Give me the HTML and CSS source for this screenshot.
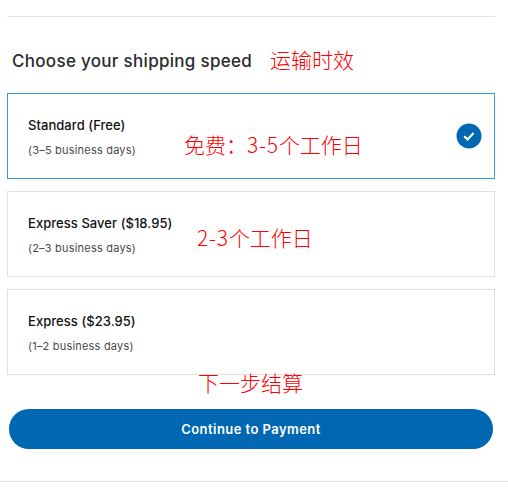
FILE: index.html
```html
<!DOCTYPE html>
<html lang="en">
<head>
  <meta charset="UTF-8">
  <title>Choose your shipping speed</title>
  <link rel="stylesheet" href="styles.css">
</head>
<body>
  <div class="page">
    <form class="shipping">
      <h2>Choose your shipping speed</h2>
      <div class="options">
        <label class="card selected">
          <span class="info">
            <strong>Standard (Free)</strong>
            <small>(3–5 business days)</small>
          </span>
          <svg class="check" viewBox="0 0 26 26" width="26" height="26">
            <circle cx="13" cy="13" r="12.5" fill="#0067b2"/>
            <path d="M8.2 13.3l3.3 3.1 6.1-6.4" fill="none" stroke="#fff" stroke-width="2.2"/>
          </svg>
        </label>
        <label class="card">
          <span class="info">
            <strong>Express Saver ($18.95)</strong>
            <small>(2–3 business days)</small>
          </span>
        </label>
        <label class="card">
          <span class="info">
            <strong>Express ($23.95)</strong>
            <small>(1–2 business days)</small>
          </span>
        </label>
      </div>
      <button type="button" class="continue">Continue to Payment</button>
    </form>

    <span class="note note-title">运输时效</span>
    <span class="note note-free">免费：<span class="num">3-5</span>个工作日</span>
    <span class="note note-saver"><span class="num">2-3</span>个工作日</span>
    <span class="note note-next">下一步结算</span>
  </div>
</body>
</html>
```

FILE: styles.css
```css
body { margin: 0; background: #fff; font-family: "Inter", "Liberation Sans", sans-serif; color: #1f1f1f; }
.page { position: relative; height: 497px; overflow: hidden; }
.shipping {
  padding: 0 0 0 7px;
  border-bottom: 1px solid #e2e2e2;
  box-sizing: border-box;
  height: 482px;
}
.shipping::before {
  content: "";
  display: block;
  height: 16px;
  width: 488px;
  border-bottom: 1px solid #e2e2e2;
}
h2 { margin: 34px 0 22px 5px; font-size: 17px; line-height: 20px; font-weight: 500; letter-spacing: 0.3px; color: #2b2b2b; }
.options { display: flex; flex-direction: column; gap: 12px; width: 488px; }
.card {
  display: flex;
  align-items: center;
  justify-content: space-between;
  height: 86px;
  box-sizing: border-box;
  border: 1px solid #e0e0e0;
  padding: 0 12px 0 20px;
}
.card.selected { border-color: #2f9fdf; }
.info { display: flex; flex-direction: column; gap: 10px; padding-top: 2px; }
.info strong { font-size: 13px; line-height: 16px; font-weight: 500; letter-spacing: 0.05px; color: #111; }
.info small { font-size: 11px; line-height: 14px; letter-spacing: 0.2px; color: #4a4a4a; }
.continue {
  display: block;
  width: 484px;
  height: 40px;
  margin: 34px 0 0 2px;
  border: 0;
  border-radius: 20px;
  background: #0067b2;
  color: #fff;
  font: 600 13px "Inter", "Liberation Sans", sans-serif;
  letter-spacing: 0.45px;
  cursor: pointer;
}
.note { position: absolute; color: #ff0000; font-size: 21px; line-height: 28px; font-family: "Noto Sans CJK SC", sans-serif; font-weight: 300; white-space: nowrap; }
.num { letter-spacing: 0.8px; }
.note-title { left: 270px; top: 45px; }
.note-free { left: 184px; top: 130px; }
.note-saver { left: 197px; top: 223px; }
.note-next { left: 198px; top: 368px; }
```
